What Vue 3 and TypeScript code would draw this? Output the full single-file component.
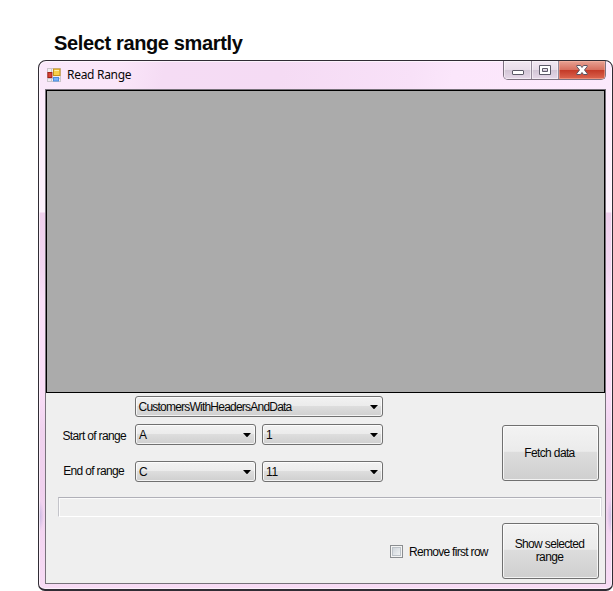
<script setup lang="ts">
import { ref } from 'vue'

interface RangeRow {
  label: string
  column: string
  row: string
}

const sheet = ref('CustomersWithHeadersAndData')
const rows = ref<RangeRow[]>([
  { label: 'Start of range', column: 'A', row: '1' },
  { label: 'End of range', column: 'C', row: '11' },
])
const removeFirst = ref(false)
</script>

<template>
  <main class="page">
    <h1 class="heading"><span>Select range smartly</span></h1>
    <section class="window">
      <header class="titlebar">
        <svg class="app-icon" width="14" height="14" viewBox="0 0 14 14">
          <rect x=".5" y=".5" width="13" height="13" fill="#f1edf1" stroke="#cbc5cb" />
          <path d="M4.500 1v12M1 10.500h12" stroke="#cbc5cb" />
          <rect x=".9" y="4.500" width="4" height="5" fill="#d94436" stroke="#a3211a" />
          <rect x="6.500" y="1" width="6.500" height="6.500" fill="#f8d04a" stroke="#c99418" />
          <path d="M7.500 2.500h4.500" stroke="#fff0a8" />
          <rect x="6.500" y="9.500" width="5" height="3.500" fill="#7ab4f8" stroke="#4d8de0" />
        </svg>
        <span class="caption">Read Range</span>
        <div class="controls">
          <button class="ctl min" aria-label="Minimize">
            <svg width="12" height="5" viewBox="0 0 12 5"><rect x=".5" y=".5" width="11" height="4" rx=".5" fill="#fff" stroke="#5c5a68" /></svg>
          </button>
          <button class="ctl max" aria-label="Maximize">
            <svg width="12" height="10" viewBox="0 0 12 10"><path fill-rule="evenodd" d="M.5.500h11v9H.500zM3.500 3.500v3h5v-3z" fill="#fff" stroke="#5c5a68" /></svg>
          </button>
          <button class="ctl close" aria-label="Close">
            <svg width="12" height="10" viewBox="0 0 12 10"><path d="M.8.500h3.700L6 2.500 7.500.500h3.700v1L8.500 5l2.700 3.500v1H7.500L6 7.500 4.500 9.500H.8v-1L3.500 5 .8 1.500z" fill="#fff" stroke="#5a5563" /></svg>
          </button>
        </div>
      </header>

      <div class="client">
        <div class="data-grid"></div>
        <div class="range-area">
          <div class="fields">
            <div class="combo wide">
              <span class="sheet">{{ sheet }}</span>
              <svg class="arrow" width="8" height="4" viewBox="0 0 8 4"><path d="M0 0h8L4.300 4h-.6z" /></svg>
            </div>
            <div v-for="item in rows" :key="item.label" class="field-row">
              <label>{{ item.label }}</label>
              <div class="combo">
                <span>{{ item.column }}</span>
                <svg class="arrow" width="8" height="4" viewBox="0 0 8 4"><path d="M0 0h8L4.300 4h-.6z" /></svg>
              </div>
              <div class="combo">
                <span>{{ item.row }}</span>
                <svg class="arrow" width="8" height="4" viewBox="0 0 8 4"><path d="M0 0h8L4.300 4h-.6z" /></svg>
              </div>
            </div>
          </div>
          <button class="push fetch">Fetch data</button>
        </div>
        <div class="status"></div>
        <footer class="actions">
          <label class="check">
            <input v-model="removeFirst" type="checkbox" />
            <span>Remove first row</span>
          </label>
          <button class="push show">Show selected<br />range</button>
        </footer>
      </div>
    </section>
  </main>
</template>

<style>
body {
  background: #fff;
}
</style>

<style scoped>
* {
  box-sizing: border-box;
}
.page {
  width: 613px;
  height: 591px;
  overflow: hidden;
  padding-left: 38px;
  font-family: "Liberation Sans", Arial, sans-serif;
  font-size: 12px;
  color: #080808;
}
.heading {
  height: 60px;
  margin: 0;
  padding: 32px 0 0 16px;
  font-size: 20px;
  line-height: 22px;
  font-weight: bold;
  letter-spacing: -0.36px;
}
.window {
  width: 575px;
  height: 531px;
  border: 1px solid #302c34;
  border-bottom-width: 2px;
  border-radius: 8px 8px 7px 7px;
  padding: 0 6px;
  background:
    radial-gradient(ellipse 5px 16px at 0 455px, #c6b6e0, transparent),
    radial-gradient(ellipse 5px 20px at 100% 455px, #c6b6e0, transparent),
    linear-gradient(100deg, #fae8fa 0, #fae6f9 80px, #f5dcf4 125px, #f5dbf4 240px, #f8e1f8 370px, #fbe6fb 410px, #fce9fc 100%) 0 0 / 100% 29px no-repeat,
    linear-gradient(#fdeafd 0, #fdf2fd 151px, #efd0ed 152px, #f2d6f1 205px, #fae0f9 240px, #fadef8 330px, #f0d3ef 370px, #f0d1ee 430px, #f7dbf5 100%);
  box-shadow: inset 0 0 0 1px rgba(255, 255, 255, 0.6);
}
.titlebar {
  height: 28px;
  display: flex;
  align-items: flex-start;
  padding-left: 2px;
}
.app-icon {
  margin-top: 7px;
}
.caption {
  margin: 5px 0 0 6px;
  font-family: "Noto Sans", "Open Sans", sans-serif;
  font-size: 12px;
  line-height: 18px;
  letter-spacing: -0.3px;
}
.controls {
  display: flex;
  margin-left: auto;
  width: 103px;
  height: 19px;
  border: 1px solid #7d7180;
  border-top: 0;
  border-radius: 0 0 5px 5px;
  overflow: hidden;
}
.ctl {
  display: flex;
  align-items: center;
  justify-content: center;
  padding: 0;
  border: 0;
  border-right: 1px solid #94899a;
  background: linear-gradient(#f2e8f2 0, #e8dde9 48%, #d2c6d6 52%, #e6d8e9 100%);
  box-shadow: inset 0 0 0 1px rgba(255, 255, 255, 0.5);
}
.min {
  width: 28px;
  padding-top: 5px;
}
.max {
  width: 27px;
}
.close {
  width: 46px;
  border-right: 0;
  background: linear-gradient(#e7a294 0, #d7705f 48%, #c43a28 52%, #dc6650 100%);
  box-shadow: inset 0 0 0 1px rgba(255, 190, 170, 0.45);
}
.client {
  width: 561px;
  height: 495px;
  border: 1px solid #77717a;
  background: #efefef;
}
.data-grid {
  height: 303px;
  border: 1px solid #000;
  background: #ababab;
}
.range-area {
  display: flex;
  height: 104px;
  padding-top: 3px;
}
.fields {
  width: 337px;
}
.combo {
  display: flex;
  align-items: center;
  justify-content: space-between;
  width: 121px;
  height: 21px;
  padding: 0 4px 0 3px;
  border: 1px solid #707070;
  border-radius: 3px;
  background: linear-gradient(#f2f2f2 0, #ebebeb 49%, #dddddd 50%, #cfcfcf 100%);
  box-shadow: inset 0 0 0 1px rgba(255, 255, 255, 0.75);
  letter-spacing: -0.4px;
  line-height: 19px;
}
.field-row .combo span {
  padding-top: 1px;
}
.wide {
  width: 248px;
  margin-left: 89px;
}
.combo .sheet {
  margin-left: -0.5px;
  padding-top: 1px;
  letter-spacing: -0.78px;
}
.arrow {
  fill: #000;
}
.field-row {
  display: flex;
  gap: 6px;
  margin-top: 7px;
}
.field-row + .field-row {
  margin-top: 16px;
}
.field-row label {
  width: 83px;
  padding-right: 3px;
  text-align: right;
  line-height: 24px;
  height: 21px;
  letter-spacing: -0.66px;
}
.field-row + .field-row label {
  padding-right: 5px;
  line-height: 20px;
}
.push {
  width: 97px;
  height: 56px;
  padding: 0 2px 0 0;
  border: 1px solid #707070;
  border-radius: 3px;
  background: linear-gradient(#f3f3f3 0, #ebebeb 47%, #dddddd 48%, #cfcfcf 100%);
  box-shadow: inset 0 0 0 1px rgba(255, 255, 255, 0.75);
  font: 12px/13px "Liberation Sans", Arial, sans-serif;
  letter-spacing: -0.64px;
  color: #080808;
}
.fetch {
  margin: 29px 0 0 119px;
}
.status {
  height: 20px;
  margin: 0 3px 0 12px;
  border: 1px solid;
  border-color: #b0b0b8 #dcdce0 #fff #c4c4ca;
  box-shadow: inset 1px 1px 0 #fbfbfb, inset -1px 0 0 #fff;
}
.actions {
  display: flex;
  justify-content: flex-end;
  padding: 6px 6px 0 0;
}
.check {
  display: flex;
  align-items: center;
  height: 56px;
  margin-right: 14px;
  letter-spacing: -0.7px;
}
.check input {
  appearance: none;
  width: 13px;
  height: 13px;
  margin: 0 6px 0 0;
  border: 1px solid #8a8d90;
  background: linear-gradient(135deg, #c5ccd3, #f9fafa);
  box-shadow: inset 0 0 0 1px #f4f4f4, inset 0 0 0 2px #bcc2c8;
}
.check span {
  width: 79px;
  padding-top: 1px;
  white-space: nowrap;
}
</style>
